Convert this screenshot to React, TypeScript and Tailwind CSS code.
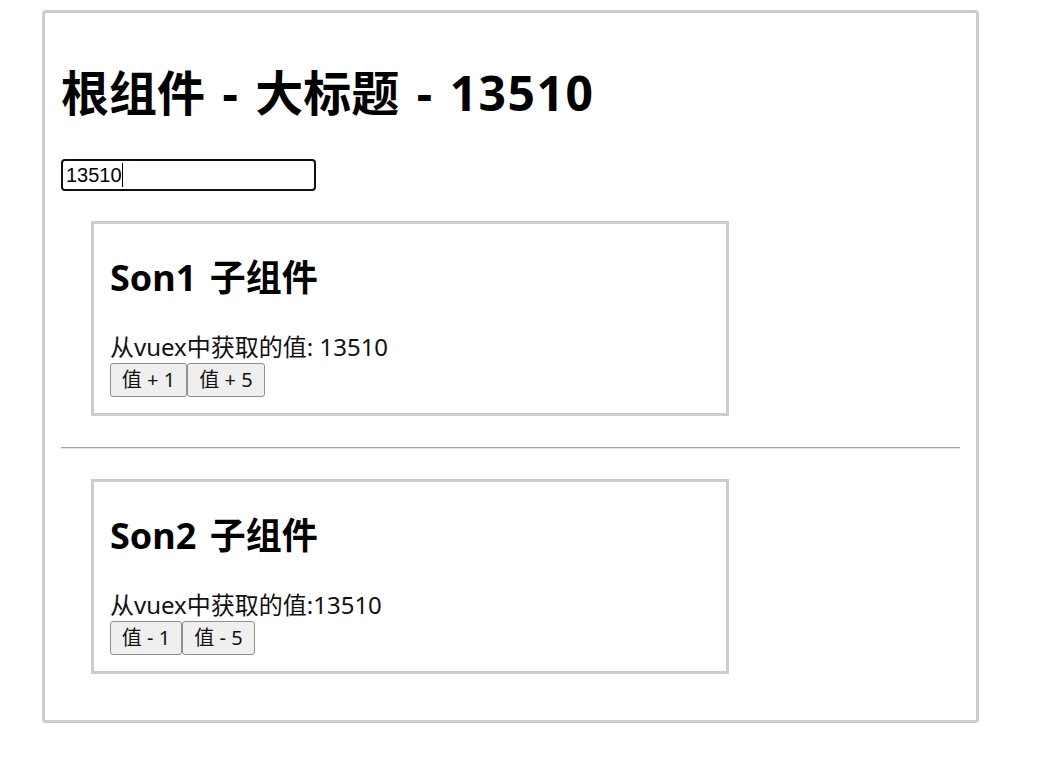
import React from "react";

const sans = { fontFamily: '"Noto Sans", "Noto Sans CJK SC", sans-serif' };

function Son({ title, label, buttons }: { title: string; label: string; buttons: { text: string; w: string }[] }) {
  return (
    <div className="ml-[30px] w-[638px] h-[195px] border-[3px] border-[#cccccc] px-[16px]">
      <h2 className="mt-[30px] text-[36px] leading-[48px] font-bold text-black [word-spacing:4px] font-['Noto_Sans','Noto_Sans_CJK_SC',sans-serif]">
        {title}
      </h2>
      <div className="mt-[29px] text-[24px] leading-[32px] text-[#111] font-['Noto_Sans','Noto_Sans_CJK_SC',sans-serif]">
        {label}
      </div>
      <div className="flex">
        {buttons.map((b) => (
          <button
            key={b.text}
            className={`${b.w} h-[34px] flex items-center justify-center bg-[#efefef] border border-[#8f8f8f] rounded-[3px] text-[20px] text-[#111] font-['Noto_Sans','Noto_Sans_CJK_SC',sans-serif]`}
          >
            {b.text}
          </button>
        ))}
      </div>
    </div>
  );
}

export default function App() {
  return (
    <div className="bg-white min-h-[764px] pt-[10px] pl-[42px]" style={sans}>
      <div className="w-[937px] h-[713px] border-[3px] border-[#cccccc] rounded-[4px] px-[16px]">
        <h1 className="mt-[48px] text-[48px] leading-[63px] font-bold text-black [word-spacing:5px] font-['Noto_Sans','Noto_Sans_CJK_SC',sans-serif]">
          根组件 - 大标题 - <span className="tracking-[1.5px]">13510</span>
        </h1>
        <div className="relative mt-[35px] w-[255px] h-[32px]">
          <input
            readOnly
            value="13510"
            className="w-[255px] h-[32px] border-2 border-[#101010] rounded-[4px] pl-[3px] text-[20px] text-black outline-none font-['Liberation_Sans',Arial,sans-serif]"
          />
          <span className="absolute left-[61px] top-[4px] w-px h-[24px] bg-black" />
        </div>
        <div className="mt-[30px]">
          <Son
            title="Son1 子组件"
            label="从vuex中获取的值: 13510"
            buttons={[
              { text: "值 + 1", w: "w-[77px]" },
              { text: "值 + 5", w: "w-[78px]" },
            ]}
          />
        </div>
        <div className="mt-[31px] border-t border-[#a0a0a0] border-b border-b-[#e6e6e6]" />
        <div className="mt-[30px]">
          <Son
            title="Son2 子组件"
            label="从vuex中获取的值:13510"
            buttons={[
              { text: "值 - 1", w: "w-[72px]" },
              { text: "值 - 5", w: "w-[73px]" },
            ]}
          />
        </div>
      </div>
    </div>
  );
}
